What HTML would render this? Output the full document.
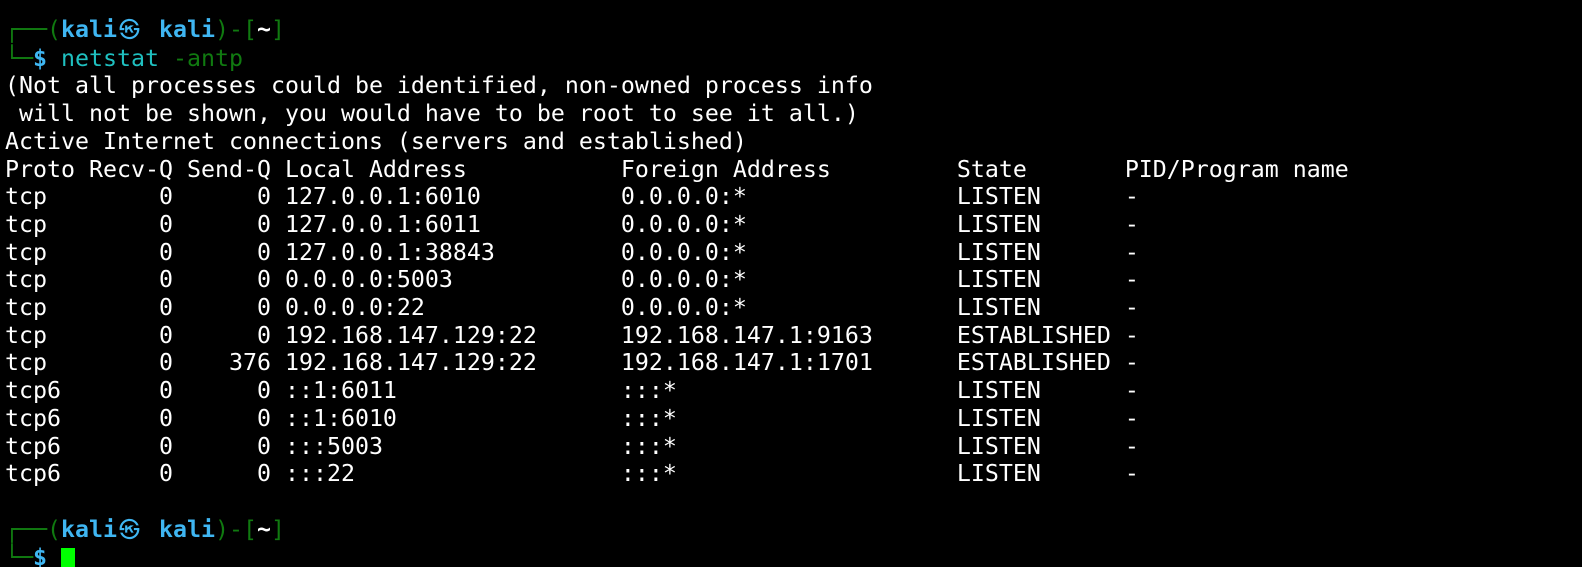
<!DOCTYPE html>
<html><head><meta charset="utf-8"><style>
html,body{margin:0;padding:0;background:#000;width:1582px;height:567px;overflow:hidden}
pre{margin:0;padding:16px 0 0 5px;font-family:"DejaVu Sans Mono","Liberation Mono","Noto Sans CJK JP",monospace;font-size:23.25px;line-height:27.7px;color:#fff}
.g{color:#107a10}.b{color:#3fb6f2;font-weight:bold}.c{color:#1fc0c0}.w{color:#fff;font-weight:bold}
.k{display:inline-block;width:42px;text-align:left;font-size:0.9em;padding-left:2px;box-sizing:border-box}
.cur{background:#00ff00;display:inline-block;width:14px;height:20px;vertical-align:-3px}
</style></head><body><pre><span class="g">┌──(</span><span class="b">kali<span class="k">㉿</span>kali</span><span class="g">)-[</span><span class="w">~</span><span class="g">]</span>
<span class="g">└─</span><span class="b">$</span> <span class="c">netstat</span> <span class="g">-antp</span>
(Not all processes could be identified, non-owned process info
 will not be shown, you would have to be root to see it all.)
Active Internet connections (servers and established)
Proto Recv-Q Send-Q Local Address           Foreign Address         State       PID/Program name
tcp        0      0 127.0.0.1:6010          0.0.0.0:*               LISTEN      -
tcp        0      0 127.0.0.1:6011          0.0.0.0:*               LISTEN      -
tcp        0      0 127.0.0.1:38843         0.0.0.0:*               LISTEN      -
tcp        0      0 0.0.0.0:5003            0.0.0.0:*               LISTEN      -
tcp        0      0 0.0.0.0:22              0.0.0.0:*               LISTEN      -
tcp        0      0 192.168.147.129:22      192.168.147.1:9163      ESTABLISHED -
tcp        0    376 192.168.147.129:22      192.168.147.1:1701      ESTABLISHED -
tcp6       0      0 ::1:6011                :::*                    LISTEN      -
tcp6       0      0 ::1:6010                :::*                    LISTEN      -
tcp6       0      0 :::5003                 :::*                    LISTEN      -
tcp6       0      0 :::22                   :::*                    LISTEN      -

<span class="g">┌──(</span><span class="b">kali<span class="k">㉿</span>kali</span><span class="g">)-[</span><span class="w">~</span><span class="g">]</span>
<span class="g">└─</span><span class="b">$</span> <span class="cur"></span></pre></body></html>
